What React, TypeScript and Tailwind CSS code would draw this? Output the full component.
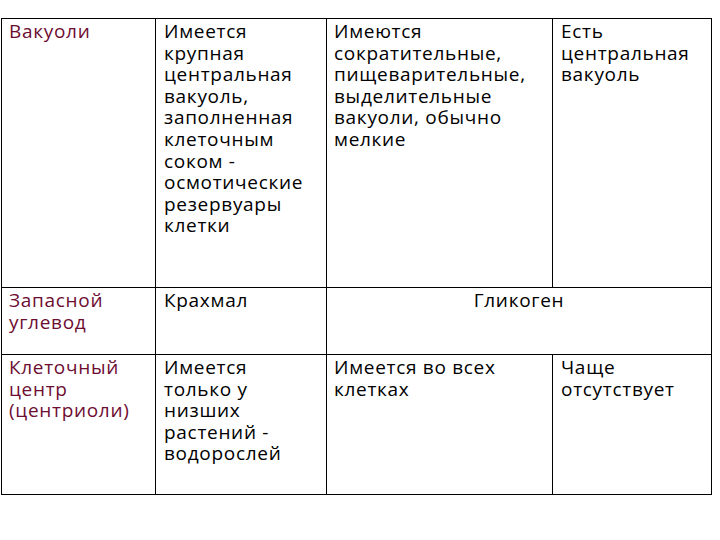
const rows = [
  {
    head: 'Вакуоли',
    cells: [
      'Имеется крупная центральная вакуоль, заполненная клеточным соком - осмотические резервуары клетки',
      'Имеются сократительные, пищеварительные, выделительные вакуоли, обычно мелкие',
      'Есть центральная вакуоль',
    ],
    h: 'h-[269px]',
  },
  { head: 'Запасной углевод', cells: ['Крахмал', 'Гликоген'], h: 'h-[67px]' },
  {
    head: 'Клеточный центр (центриоли)',
    cells: ['Имеется только у низших растений - водорослей', 'Имеется во всех клетках', 'Чаще отсутствует'],
    h: 'h-[140px]',
  },
];

export default function App() {
  return (
    <div className="w-[720px] h-[540px] bg-white pt-[18px] pl-px" style={{ fontFamily: '"Open Sans", "DejaVu Sans", sans-serif' }}>
      <table className="border-collapse table-fixed w-[711px] text-[19px] leading-[21.6px] tracking-[0.7px] text-black">
        <colgroup>
          <col className="w-[154px]" />
          <col className="w-[171px]" />
          <col className="w-[226px]" />
          <col className="w-[159px]" />
        </colgroup>
        <tbody>
          {rows.map((r) => (
            <tr key={r.head} className={r.h}>
              <td className="border border-black align-top pl-[7px] pr-1 pt-[2px] text-[#6d0d32]">{r.head}</td>
              <td className="border border-black align-top pl-[8px] pr-[14px] pt-[2px]">{r.cells[0]}</td>
              {r.cells.length === 2 ? (
                <td colSpan={2} className="border border-black align-top text-center pt-[2px]">
                  {r.cells[1]}
                </td>
              ) : (
                <>
                  <td className="border border-black align-top pl-[7px] pr-1 pt-[2px]">{r.cells[1]}</td>
                  <td className="border border-black align-top pl-[8px] pr-1 pt-[2px]">{r.cells[2]}</td>
                </>
              )}
            </tr>
          ))}
        </tbody>
      </table>
    </div>
  );
}
